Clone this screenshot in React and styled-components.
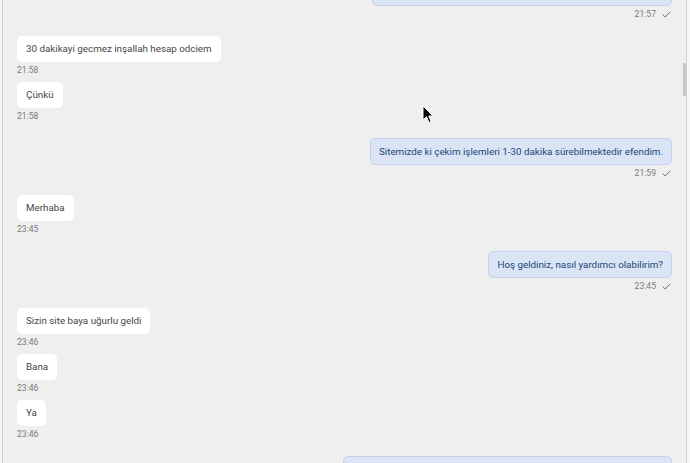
import React from 'react'
import styled, { createGlobalStyle } from 'styled-components'

const GlobalStyle = createGlobalStyle`
  html, body {
    margin: 0;
    padding: 0;
    background: #f4f4f4;
    font-family: Roboto, "Noto Sans", Arial, sans-serif;
  }
`

const Frame = styled.div`
  position: relative;
  display: flex;
  height: 463px;
  overflow: hidden;
  padding-left: 2px;
  background: #f4f4f4;
`

const Chat = styled.div`
  flex: 1;
  display: flex;
  flex-direction: column;
  border-left: 1px solid #cdcdcd;
  background: #efefef;
  padding: 0 11px 0 14px;
  overflow: hidden;
`

// scroll offset: the first message is partly above the top edge
const List = styled.div`
  display: flex;
  flex-direction: column;
  margin-top: -21px;
`

const Message = styled.div`
  display: flex;
  flex-direction: column;
  align-items: ${p => (p.mine ? 'flex-end' : 'flex-start')};
  margin-top: ${p => (p.first ? '0' : p.switched ? '16px' : '6px')};
`

const Bubble = styled.div`
  font-size: 9.8px;
  line-height: 14px;
  border-radius: 5px;
  white-space: nowrap;
  background: ${p => (p.mine ? '#dbe4f4' : '#ffffff')};
  color: ${p => (p.mine ? '#184679' : '#464646')};
  border: ${p => (p.mine ? '1px solid #c2d0ee' : 'none')};
  padding: ${p => (p.mine ? '5.5px 8px' : '6px 9px')};
`

const Meta = styled.div`
  display: flex;
  align-items: center;
  gap: 6px;
  margin-top: 2px;
  height: 12px;
  font-size: 8.6px;
  line-height: 12px;
  color: #7a7a7a;
  padding-right: ${p => (p.mine ? '1px' : '0')};
`

const Gutter = styled.div`
  display: flex;
  width: 7px;
  background: #f6f6f6;
`

const Track = styled.div`
  width: 3px;
  background: #efefef;
`

const Thumb = styled.div`
  margin-top: 63px;
  height: 33px;
  background: #c6c6c6;
  border-radius: 1px;
`

const Divider = styled.div`
  width: 1px;
  background: #d2d2d2;
`

const Pointer = styled.svg`
  position: absolute;
  left: 422px;
  top: 105px;
`

const Check = () => (
  <svg width="9" height="7" viewBox="0 0 9 7">
    <path d="M0.7 3.6 L3.2 6 L8.3 0.8" fill="none" stroke="#6f6f6f" strokeWidth="1" />
  </svg>
)

const messages = [
  { mine: true, text: 'Çekim talebiniz onaylandı, kısa süre içinde hesabınıza geçecektir.', time: '21:57' },
  { mine: false, text: '30 dakikayi gecmez inşallah hesap odciem', time: '21:58' },
  { mine: false, text: 'Çünkü', time: '21:58' },
  { mine: true, text: 'Sitemizde ki çekim işlemleri 1-30 dakika sürebilmektedir efendim.', time: '21:59' },
  { mine: false, text: 'Merhaba', time: '23:45' },
  { mine: true, text: 'Hoş geldiniz, nasıl yardımcı olabilirim?', time: '23:45' },
  { mine: false, text: 'Sizin site baya uğurlu geldi', time: '23:46' },
  { mine: false, text: 'Bana', time: '23:46' },
  { mine: false, text: 'Ya', time: '23:46' },
  { mine: true, text: 'Rica ederiz, bol şans dileriz. Başka bir sorunuz olursa bize yazabilirsiniz.', time: '23:47' },
]

export default function App() {
  return (
    <>
      <GlobalStyle />
      <Frame>
        <Chat>
          <List>
            {messages.map((m, i) => (
              <Message
                key={i}
                mine={m.mine}
                first={i === 0}
                switched={i > 0 && messages[i - 1].mine !== m.mine}
              >
                <Bubble mine={m.mine}>{m.text}</Bubble>
                <Meta mine={m.mine}>
                  <span>{m.time}</span>
                  {m.mine && <Check />}
                </Meta>
              </Message>
            ))}
          </List>
        </Chat>
        <Gutter>
          <Track>
            <Thumb />
          </Track>
          <Divider />
        </Gutter>
        <Pointer width="12" height="19" viewBox="0 0 12 19">
          <path d="M1 1 L1 15 L4.5 11.8 L7 17.5 L9.2 16.5 L6.8 11 L11 11 Z" fill="#000" stroke="#fff" strokeWidth="1" strokeLinejoin="round" />
        </Pointer>
      </Frame>
    </>
  )
}
